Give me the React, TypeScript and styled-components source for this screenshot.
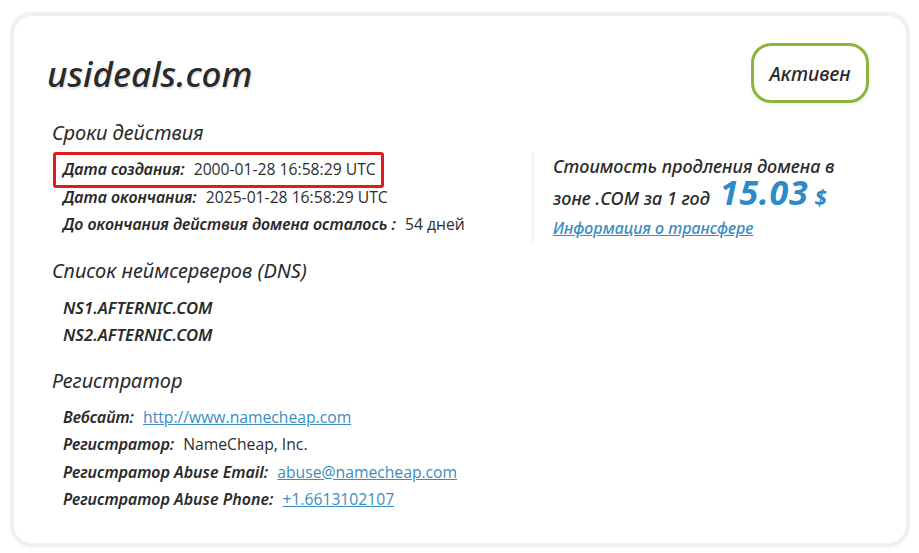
import React from "react";
import styled, { createGlobalStyle } from "styled-components";

const Global = createGlobalStyle`
  html, body { margin: 0; padding: 0; background: #ffffff; }
  body { font-family: "Noto Sans", "Open Sans", sans-serif; color: #2d2d2d; }
  * { box-sizing: border-box; }
`;

const Page = styled.div`
  padding: 12px 9px 6px 10px;
`;

const Card = styled.div`
  width: 900px;
  height: 535px;
  border: 4px solid #f0f0f0;
  border-radius: 22px;
  box-shadow: 0 0 3px rgba(0, 0, 0, 0.05);
  padding: 27px 37px 0 33px;
`;

const Header = styled.div`
  display: flex;
  align-items: center;
  justify-content: space-between;
`;

const Title = styled.h1`
  margin: 0;
  font-size: 35px;
  font-style: italic;
  font-weight: 500;
  color: #2a2a2a;
  text-shadow: 1px 2px 2px rgba(0, 0, 0, 0.12);
  line-height: 40px;
  margin-top: 2px;
`;

const Badge = styled.div`
  width: 118px;
  height: 60px;
  border: 3px solid #8db43b;
  border-radius: 20px;
  display: flex;
  align-items: center;
  justify-content: center;
  font-size: 19.5px;
  font-style: italic;
  font-weight: 500;
  color: #2a2a2a;
  box-shadow: 1px 2px 4px rgba(0, 0, 0, 0.06);
`;

const Body = styled.div`
  display: grid;
  grid-template-columns: 485px 1fr;
  margin-top: 18px;
`;

const Column = styled.div`
  display: flex;
  flex-direction: column;
`;

const Section = styled.section`
  display: flex;
  flex-direction: column;
  & + & {
    margin-top: 20px;
  }
`;

const Heading = styled.h2`
  margin: 0 0 11px 5px;
  font-size: 20px;
  line-height: 24px;
  font-style: italic;
  font-weight: 400;
  color: #2a2a2a;
`;

const Row = styled.div<{ $highlight?: boolean }>`
  position: relative;
  display: flex;
  align-items: baseline;
  gap: 9px;
  width: fit-content;
  margin-left: 16px;
  line-height: 27.5px;
  ${(p) =>
    p.$highlight &&
    `
    &::after {
      content: "";
      position: absolute;
      left: -10px;
      right: -8px;
      top: -4px;
      bottom: -4px;
      border: 3px solid #e01b1b;
      border-radius: 3px;
      pointer-events: none;
    }
  `}
`;

const Label = styled.span`
  font-size: 16px;
  font-style: italic;
  font-weight: 600;
  color: #2a2a2a;
`;

const Value = styled.span`
  font-family: "Open Sans", "Noto Sans", sans-serif;
  font-size: 15.7px;
  color: #2d2d2d;
`;

const ValueLink = styled.a`
  font-family: "Open Sans", "Noto Sans", sans-serif;
  font-size: 15.7px;
  color: #3a8cc4;
  text-decoration: underline;
`;

const NsItem = styled.div`
  margin-left: 16px;
  font-size: 16.7px;
  font-style: italic;
  font-weight: 600;
  line-height: 27.5px;
  color: #2a2a2a;
`;

const PriceBox = styled.div`
  margin-top: 31px;
  align-self: start;
  border-left: 2px solid #f2f2f2;
  padding: 0 0 0 19px;
  height: 90px;
`;

const PriceText = styled.div`
  font-size: 18px;
  font-style: italic;
  font-weight: 500;
  line-height: 26px;
  color: #2a2a2a;
  margin-top: 1px;
`;

const Price = styled.span`
  font-size: 34px;
  font-weight: 700;
  font-style: italic;
  letter-spacing: 0.8px;
  color: #2c8bc7;
  line-height: 26px;
  margin-left: 10px;
`;

const Currency = styled.span`
  font-size: 22px;
  font-weight: 700;
  font-style: italic;
  color: #2c8bc7;
  line-height: 10px;
  margin-left: 6px;
`;

const TransferLink = styled.a`
  display: block;
  margin-top: 6px;
  font-size: 16px;
  font-style: italic;
  font-weight: 500;
  color: #3a8cc4;
  text-decoration: underline;
  line-height: 22px;
`;

export default function App() {
  return (
    <>
      <Global />
      <Page>
        <Card>
          <Header>
            <Title>usideals.com</Title>
            <Badge>Активен</Badge>
          </Header>
          <Body>
            <Column>
              <Section>
                <Heading>Сроки действия</Heading>
                <Row $highlight>
                  <Label>Дата создания:</Label>
                  <Value>2000-01-28 16:58:29 UTC</Value>
                </Row>
                <Row>
                  <Label>Дата окончания:</Label>
                  <Value>2025-01-28 16:58:29 UTC</Value>
                </Row>
                <Row>
                  <Label>До окончания действия домена осталось :</Label>
                  <Value>54 дней</Value>
                </Row>
              </Section>
              <Section>
                <Heading>Список неймсерверов (DNS)</Heading>
                <NsItem>NS1.AFTERNIC.COM</NsItem>
                <NsItem>NS2.AFTERNIC.COM</NsItem>
              </Section>
              <Section>
                <Heading>Регистратор</Heading>
                <Row>
                  <Label>Вебсайт:</Label>
                  <ValueLink href="#">http://www.namecheap.com</ValueLink>
                </Row>
                <Row>
                  <Label>Регистратор:</Label>
                  <Value>NameCheap, Inc.</Value>
                </Row>
                <Row>
                  <Label>Регистратор Abuse Email:</Label>
                  <ValueLink href="#">abuse@namecheap.com</ValueLink>
                </Row>
                <Row>
                  <Label>Регистратор Abuse Phone:</Label>
                  <ValueLink href="#">+1.6613102107</ValueLink>
                </Row>
              </Section>
            </Column>
            <PriceBox>
              <PriceText>
                Стоимость продления домена в
                <br />
                зоне .COM за 1 год
                <Price>15.03</Price>
                <Currency>$</Currency>
              </PriceText>
              <TransferLink href="#">Информация о трансфере</TransferLink>
            </PriceBox>
          </Body>
        </Card>
      </Page>
    </>
  );
}
